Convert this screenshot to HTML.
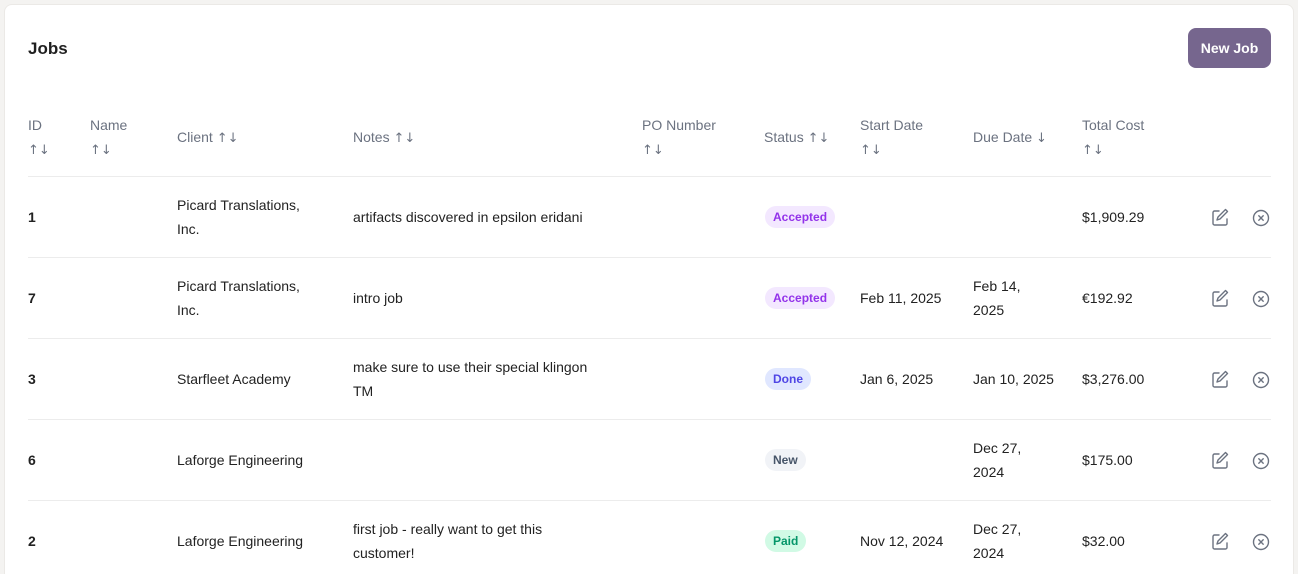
<!DOCTYPE html>
<html style="overflow:hidden;height:574px"><head><style>
body{margin:0;background:#f4f3f1;font-family:"Liberation Sans",Arial,sans-serif;width:1298px;height:574px;overflow:hidden;position:relative;color:#222}
.card{position:absolute;left:4px;top:4px;width:1290px;height:570px;background:#fff;border-radius:8px 8px 0 0;border:1px solid #ebe9e6;border-bottom:none;box-sizing:border-box}
.a{position:absolute;font-size:14px;line-height:24px;white-space:nowrap}
.h{color:#6b7280}
.ar{font-family:"DejaVu Sans",sans-serif;font-size:13px;color:#6b7280}
.line{position:absolute;left:28px;width:1243px;height:1px;background:#ececec}
.b{position:absolute;height:22px;line-height:22px;padding:0 8px;border-radius:11px;font-size:12px;font-weight:bold}
svg{position:absolute}
</style></head><body>
<div class="card"></div>
<div class="a" style="left:28px;top:37px;font-size:17px;font-weight:bold;color:#1f1f1f">Jobs</div>
<div style="position:absolute;left:1188px;top:28px;width:83px;height:40px;background:#76668e;border-radius:8px;color:#fff;font-size:14px;font-weight:bold;line-height:40px;text-align:center">New Job</div>

<div class="a h" style="left:28px;top:113px">ID<br><span class="ar">↑↓</span></div>
<div class="a h" style="left:90px;top:113px">Name<br><span class="ar">↑↓</span></div>
<div class="a h" style="left:177px;top:125px">Client <span class="ar">↑↓</span></div>
<div class="a h" style="left:353px;top:125px">Notes <span class="ar">↑↓</span></div>
<div class="a h" style="left:642px;top:113px">PO Number<br><span class="ar">↑↓</span></div>
<div class="a h" style="left:764px;top:125px">Status <span class="ar">↑↓</span></div>
<div class="a h" style="left:860px;top:113px">Start Date<br><span class="ar">↑↓</span></div>
<div class="a h" style="left:973px;top:125px">Due Date <span class="ar">↓</span></div>
<div class="a h" style="left:1082px;top:113px">Total Cost<br><span class="ar">↑↓</span></div>
<div class="line" style="top:176px"></div>
<div class="line" style="top:257px"></div>
<div class="line" style="top:338px"></div>
<div class="line" style="top:419px"></div>
<div class="line" style="top:500px"></div>

<div class="a" style="left:28px;top:205px;font-weight:bold">1</div>
<div class="a" style="left:177px;top:193px">Picard Translations,<br>Inc.</div>
<div class="a" style="left:353px;top:205px">artifacts discovered in epsilon eridani</div>
<div class="b" style="left:765px;top:206px;background:#f3e8ff;color:#9333ea">Accepted</div>
<div class="a" style="left:1082px;top:205px">$1,909.29</div>

<div class="a" style="left:28px;top:286px;font-weight:bold">7</div>
<div class="a" style="left:177px;top:274px">Picard Translations,<br>Inc.</div>
<div class="a" style="left:353px;top:286px">intro job</div>
<div class="b" style="left:765px;top:287px;background:#f3e8ff;color:#9333ea">Accepted</div>
<div class="a" style="left:860px;top:286px">Feb 11, 2025</div>
<div class="a" style="left:973px;top:274px">Feb 14,<br>2025</div>
<div class="a" style="left:1082px;top:286px">€192.92</div>

<div class="a" style="left:28px;top:367px;font-weight:bold">3</div>
<div class="a" style="left:177px;top:367px">Starfleet Academy</div>
<div class="a" style="left:353px;top:355px">make sure to use their special klingon<br>TM</div>
<div class="b" style="left:765px;top:368px;background:#e0e7ff;color:#4f46e5">Done</div>
<div class="a" style="left:860px;top:367px">Jan 6, 2025</div>
<div class="a" style="left:973px;top:367px">Jan 10, 2025</div>
<div class="a" style="left:1082px;top:367px">$3,276.00</div>

<div class="a" style="left:28px;top:448px;font-weight:bold">6</div>
<div class="a" style="left:177px;top:448px">Laforge Engineering</div>
<div class="b" style="left:765px;top:449px;background:#f1f3f7;color:#475569">New</div>
<div class="a" style="left:973px;top:436px">Dec 27,<br>2024</div>
<div class="a" style="left:1082px;top:448px">$175.00</div>

<div class="a" style="left:28px;top:529px;font-weight:bold">2</div>
<div class="a" style="left:177px;top:529px">Laforge Engineering</div>
<div class="a" style="left:353px;top:517px">first job - really want to get this<br>customer!</div>
<div class="b" style="left:765px;top:530px;background:#d1fae5;color:#059669">Paid</div>
<div class="a" style="left:860px;top:529px">Nov 12, 2024</div>
<div class="a" style="left:973px;top:517px">Dec 27,<br>2024</div>
<div class="a" style="left:1082px;top:529px">$32.00</div>

<svg width="0" height="0"><defs>
<g id="e" fill="none" stroke="#6b7280" stroke-width="1.4" stroke-linecap="round" stroke-linejoin="round"><path d="M9 4H4.5A1.5 1.5 0 0 0 3 5.5v11A1.5 1.5 0 0 0 4.5 18h11a1.5 1.5 0 0 0 1.5-1.5V12"/><path d="M15.5 2.5l2 2L10 12l-3 1 1-3z"/></g>
<g id="x" fill="none" stroke="#6b7280" stroke-width="1.4" stroke-linecap="round"><circle cx="10" cy="10" r="7.5"/><path d="M7.8 7.8l4.4 4.4M12.2 7.8l-4.4 4.4"/></g>
</defs></svg>
<svg style="left:1210px;top:207px" width="20" height="20"><use href="#e"/></svg>
<svg style="left:1251px;top:208px" width="20" height="20"><use href="#x"/></svg>
<svg style="left:1210px;top:288px" width="20" height="20"><use href="#e"/></svg>
<svg style="left:1251px;top:289px" width="20" height="20"><use href="#x"/></svg>
<svg style="left:1210px;top:369px" width="20" height="20"><use href="#e"/></svg>
<svg style="left:1251px;top:370px" width="20" height="20"><use href="#x"/></svg>
<svg style="left:1210px;top:450px" width="20" height="20"><use href="#e"/></svg>
<svg style="left:1251px;top:451px" width="20" height="20"><use href="#x"/></svg>
<svg style="left:1210px;top:531px" width="20" height="20"><use href="#e"/></svg>
<svg style="left:1251px;top:532px" width="20" height="20"><use href="#x"/></svg>
</body></html>
